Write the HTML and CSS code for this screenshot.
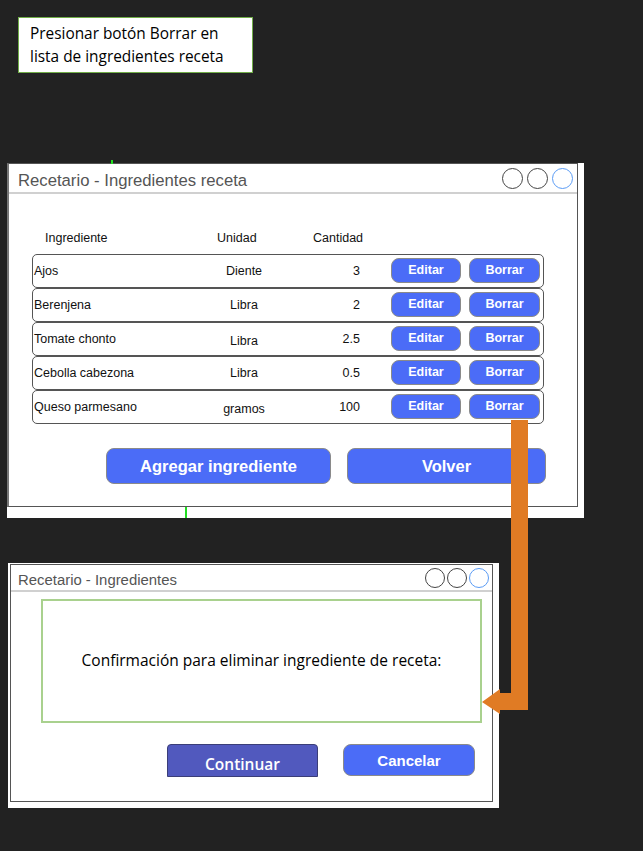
FILE: index.html
```html
<!DOCTYPE html>
<html>
<head>
    <meta charset="utf-8">
    <title>Recetario - Borrar ingrediente</title>
    <link rel="stylesheet" href="styles.css">
</head>
<body>
<div class="page">

<div class="note">Presionar botón Borrar en<br>lista de ingredientes receta</div>

<div class="window main-win">
    <div class="frame">
        <div class="titlebar">
            <span class="title">Recetario - Ingredientes receta</span>
            <div class="dots"><span class="dot"></span><span class="dot"></span><span class="dot blue"></span></div>
        </div>

        <div class="table">
            <div class="head">
                <span class="h-name">Ingrediente</span>
                <span class="h-unit">Unidad</span>
                <span class="h-qty">Cantidad</span>
            </div>
            <div class="row">
                <span class="c-name">Ajos</span><span class="c-unit">Diente</span><span class="c-qty">3</span>
                <button class="btn small edit">Editar</button><button class="btn small del">Borrar</button>
            </div>
            <div class="row">
                <span class="c-name">Berenjena</span><span class="c-unit">Libra</span><span class="c-qty">2</span>
                <button class="btn small edit">Editar</button><button class="btn small del">Borrar</button>
            </div>
            <div class="row">
                <span class="c-name">Tomate chonto</span><span class="c-unit down">Libra</span><span class="c-qty">2.5</span>
                <button class="btn small edit">Editar</button><button class="btn small del">Borrar</button>
            </div>
            <div class="row">
                <span class="c-name">Cebolla cabezona</span><span class="c-unit">Libra</span><span class="c-qty">0.5</span>
                <button class="btn small edit">Editar</button><button class="btn small del">Borrar</button>
            </div>
            <div class="row">
                <span class="c-name">Queso parmesano</span><span class="c-unit down">gramos</span><span class="c-qty">100</span>
                <button class="btn small edit">Editar</button><button class="btn small del">Borrar</button>
            </div>
        </div>

        <div class="actions">
            <button class="btn big add">Agregar ingrediente</button>
            <button class="btn big back">Volver</button>
        </div>
    </div>
</div>

<div class="window confirm-win">
    <div class="frame">
        <div class="titlebar small-bar">
            <span class="title small-title">Recetario - Ingredientes</span>
            <div class="dots small-dots"><span class="dot"></span><span class="dot"></span><span class="dot blue"></span></div>
        </div>
        <div class="message">Confirmación para eliminar ingrediente de receta:</div>
        <div class="confirm-actions">
            <button class="continue">Continuar</button>
            <button class="btn cancel">Cancelar</button>
        </div>
    </div>
</div>

<!-- flow arrow from Borrar to the confirm dialog -->
<svg class="arrow" width="50" height="300" viewBox="0 0 50 300">
    <path d="M31 5 H48 V295 H20 V299 L2 287 L20 274 V278 H31 Z" fill="#e07b24"/>
</svg>
<span class="tick tick-top"></span>
<span class="tick tick-bottom"></span>

</div>
</body>
</html>
```

FILE: styles.css
```css
body {
    margin: 0;
    background-color: #222222;
    font-family: "Liberation Sans", Arial, sans-serif;
}
.page {
    position: relative;
    width: 643px;
    height: 851px;
    overflow: hidden;
}

/* sticky note */
.note {
    margin: 17px 0 0 18px;
    width: 235px;
    height: 56px;
    box-sizing: border-box;
    background: #fff;
    border: 1px solid #70ad47;
    padding: 4px 0 0 11px;
    font-family: "Open Sans", sans-serif;
    font-size: 15.4px;
    line-height: 23px;
    color: #000;
}

/* windows */
.window {
    background: #fff;
}
.main-win {
    margin: 90px 0 0 7px;
    width: 577px;
    padding: 0 6px 11px 0;
    box-sizing: border-box;
}
.frame {
    border: 1px solid #555;
    border-left: 2px solid #777;
}
.titlebar {
    height: 28px;
    border-bottom: 2px solid #d0d0d0;
    display: flex;
    align-items: center;
    justify-content: space-between;
    padding: 0 4px 0 9px;
}
.title {
    font-size: 16.7px;
    color: #555;
    padding-top: 6px;
}
.dots {
    display: flex;
    gap: 4px;
}
.dot {
    width: 21px;
    height: 21px;
    box-sizing: border-box;
    border: 1.5px solid #444;
    border-radius: 50%;
}
.dot.blue {
    border-color: #5b9cf5;
}

/* table */
.table {
    margin-left: 23px;
    width: 512px;
}
.head {
    margin-top: 36px;
    margin-bottom: 8px;
    height: 16px;
    display: flex;
    font-size: 12.5px;
    line-height: 16px;
    color: #111;
}
.h-name {
    width: 172px;
    padding-left: 13px;
}
.h-unit {
    width: 96px;
}
.row {
    height: 34px;
    box-sizing: border-box;
    border: 1px solid #555;
    border-radius: 5px;
    display: flex;
    align-items: center;
    font-size: 12.5px;
    color: #111;
}
.c-name {
    width: 156px;
    padding-left: 1px;
}
.c-unit {
    width: 108px;
    text-align: center;
}
.c-qty {
    width: 62px;
    text-align: right;
    margin-right: 31px;
}
.down {
    margin-top: 4px;
}

.btn {
    background: #4b6cf7;
    color: #fff;
    font-family: "Liberation Sans", Arial, sans-serif;
    font-weight: bold;
    border: 1px solid #8a8a8a;
    border-radius: 8px;
    padding: 0;
}
.btn.small {
    height: 25px;
    font-size: 12.5px;
    margin-top: -2px;
}
.edit {
    width: 70px;
    margin-right: 8px;
}
.del {
    width: 71px;
}

.actions {
    margin: 24px 0 0 97px;
    padding-bottom: 22px;
    display: flex;
    gap: 16px;
}
.btn.big {
    height: 36px;
    font-size: 16.5px;
}
.add {
    width: 225px;
}
.back {
    width: 199px;
}

/* confirm dialog */
.confirm-win {
    margin: 45px 0 0 8px;
    width: 491px;
    padding: 1px 6px 6px 2px;
    box-sizing: border-box;
}
.confirm-win .frame {
    border-left: 1px solid #555;
}
.small-bar {
    height: 25px;
    padding: 0 3px 0 7px;
}
.small-title {
    font-size: 14.9px;
    padding-top: 4px;
}
.small-dots {
    gap: 2px;
}
.small-dots .dot {
    width: 20px;
    height: 20px;
}
.message {
    margin: 7px 0 0 30px;
    width: 441px;
    height: 124px;
    box-sizing: border-box;
    border: 2px solid #a9d18e;
    display: flex;
    align-items: center;
    justify-content: center;
    padding-bottom: 2px;
    font-family: "Open Sans", sans-serif;
    font-size: 15.5px;
    color: #000;
}
.confirm-actions {
    margin: 21px 0 0 156px;
    padding-bottom: 24px;
    display: flex;
    gap: 25px;
}
.continue {
    width: 151px;
    height: 33px;
    background: #5159be;
    color: #fff;
    border: 1px solid #3b3e78;
    border-radius: 4px 4px 0 0;
    font-family: "Open Sans", sans-serif;
    font-weight: 600;
    font-size: 15.5px;
    padding: 6px 0 0 0;
}
.cancel {
    width: 132px;
    height: 32px;
    font-size: 15px;
}

/* overlays */
.arrow {
    position: absolute;
    left: 480px;
    top: 415px;
}
.tick {
    position: absolute;
    width: 2px;
    background: #22dd22;
}
.tick-top {
    left: 111px;
    top: 160px;
    height: 4px;
}
.tick-bottom {
    left: 185px;
    top: 507px;
    height: 11px;
}
```
